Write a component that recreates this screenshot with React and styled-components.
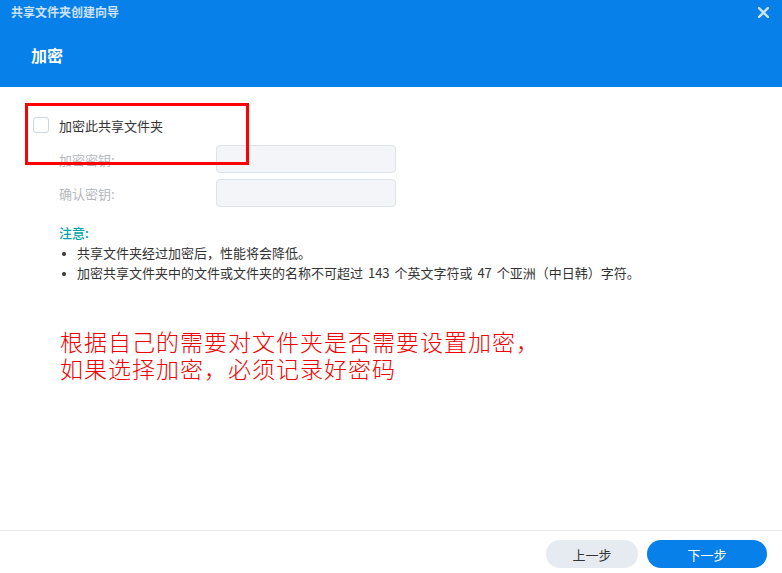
import React from "react";
import styled, { createGlobalStyle } from "styled-components";

const GlobalStyle = createGlobalStyle`
  html, body {
    margin: 0;
    padding: 0;
    background: #fff;
    font-family: "Noto Sans CJK SC", "Noto Sans", sans-serif;
  }
`;

const Dialog = styled.div`
  position: relative;
  width: 782px;
  height: 573px;
  display: flex;
  flex-direction: column;
  background: #fff;
  overflow: hidden;
`;

const Header = styled.div`
  height: 87px;
  background: #0780ea;
  display: flex;
  flex-direction: column;
  flex-shrink: 0;
`;

const TitleBar = styled.div`
  height: 24px;
  display: flex;
  align-items: center;
  justify-content: space-between;
  padding: 0 12px 0 11px;
`;

const Title = styled.div`
  font-size: 12px;
  font-weight: bold;
  color: #cde2fb;
  line-height: 24px;
`;

const Close = styled.div`
  width: 14px;
  height: 14px;
  display: flex;
  align-items: center;
  justify-content: center;
`;

const Heading = styled.div`
  padding: 19px 0 0 31px;
  font-size: 16px;
  font-weight: bold;
  color: #fff;
  line-height: 24px;
`;

const Body = styled.div`
  flex: 1;
  padding: 30px 0 0 33px;
  display: flex;
  flex-direction: column;
`;

const CheckRow = styled.label`
  display: flex;
  align-items: center;
  gap: 10px;
  height: 16px;
  font-size: 13px;
  color: #333;
`;

const Box = styled.span`
  width: 14px;
  height: 14px;
  border: 1px solid #cdd7e1;
  border-radius: 3px;
  background: #fff;
`;

const Form = styled.div`
  margin: 12px 0 0 26px;
  display: flex;
  flex-direction: column;
  gap: 6px;
`;

const Field = styled.div`
  display: flex;
  align-items: center;
  height: 28px;
`;

const FieldLabel = styled.span`
  width: 157px;
  font-size: 13px;
  color: #b4b8bd;
`;

const Input = styled.div`
  width: 178px;
  height: 26px;
  border: 1px solid #dce3ea;
  border-radius: 4px;
  background: #f3f5f8;
`;

const Notes = styled.div`
  margin: 16px 0 0 26px;
  font-size: 13px;
  line-height: 20px;
  color: #333;
`;

const NoteTitle = styled.div`
  color: #00a3a8;
  font-weight: 500;
`;

const NoteList = styled.ul`
  margin: 0;
  padding: 0 0 0 18px;
  word-spacing: 2px;
  li::marker {
    font-size: 10px;
  }
`;

const Annotation = styled.div`
  margin: 45px 0 0 27px;
  font-size: 23px;
  line-height: 27px;
  letter-spacing: 1px;
  font-weight: 300;
  color: #f20000;
`;

const Highlight = styled.div`
  position: absolute;
  left: 25px;
  top: 103px;
  width: 218px;
  height: 56px;
  border: 3px solid #f00;
  pointer-events: none;
`;

const Footer = styled.div`
  height: 43px;
  border-top: 1px solid #e6e8eb;
  display: flex;
  justify-content: flex-end;
  align-items: flex-start;
  gap: 9px;
  padding: 9px 15px 0 0;
  box-sizing: border-box;
`;

const Button = styled.button`
  height: 28px;
  width: ${(p) => (p.$primary ? "120px" : "92px")};
  border: none;
  border-radius: 14px;
  font-family: inherit;
  font-size: 13px;
  background: ${(p) => (p.$primary ? "#0780ea" : "#e6ebf2")};
  color: ${(p) => (p.$primary ? "#fff" : "#333")};
  padding: 0;
`;

export default function App() {
  return (
    <>
      <GlobalStyle />
      <Dialog>
        <Header>
          <TitleBar>
            <Title>共享文件夹创建向导</Title>
            <Close>
              <svg width="11" height="11" viewBox="0 0 11 11">
                <path d="M1 1L10 10M10 1L1 10" stroke="#cde2fb" strokeWidth="2.4" strokeLinecap="square" />
              </svg>
            </Close>
          </TitleBar>
          <Heading>加密</Heading>
        </Header>
        <Body>
          <CheckRow>
            <Box />
            加密此共享文件夹
          </CheckRow>
          <Form>
            <Field>
              <FieldLabel>加密密钥:</FieldLabel>
              <Input />
            </Field>
            <Field>
              <FieldLabel>确认密钥:</FieldLabel>
              <Input />
            </Field>
          </Form>
          <Notes>
            <NoteTitle>注意:</NoteTitle>
            <NoteList>
              <li>共享文件夹经过加密后，性能将会降低。</li>
              <li>加密共享文件夹中的文件或文件夹的名称不可超过 143 个英文字符或 47 个亚洲（中日韩）字符。</li>
            </NoteList>
          </Notes>
          <Annotation>
            根据自己的需要对文件夹是否需要设置加密，
            <br />
            如果选择加密，必须记录好密码
          </Annotation>
        </Body>
        <Footer>
          <Button>上一步</Button>
          <Button $primary>下一步</Button>
        </Footer>
        <Highlight />
      </Dialog>
    </>
  );
}
